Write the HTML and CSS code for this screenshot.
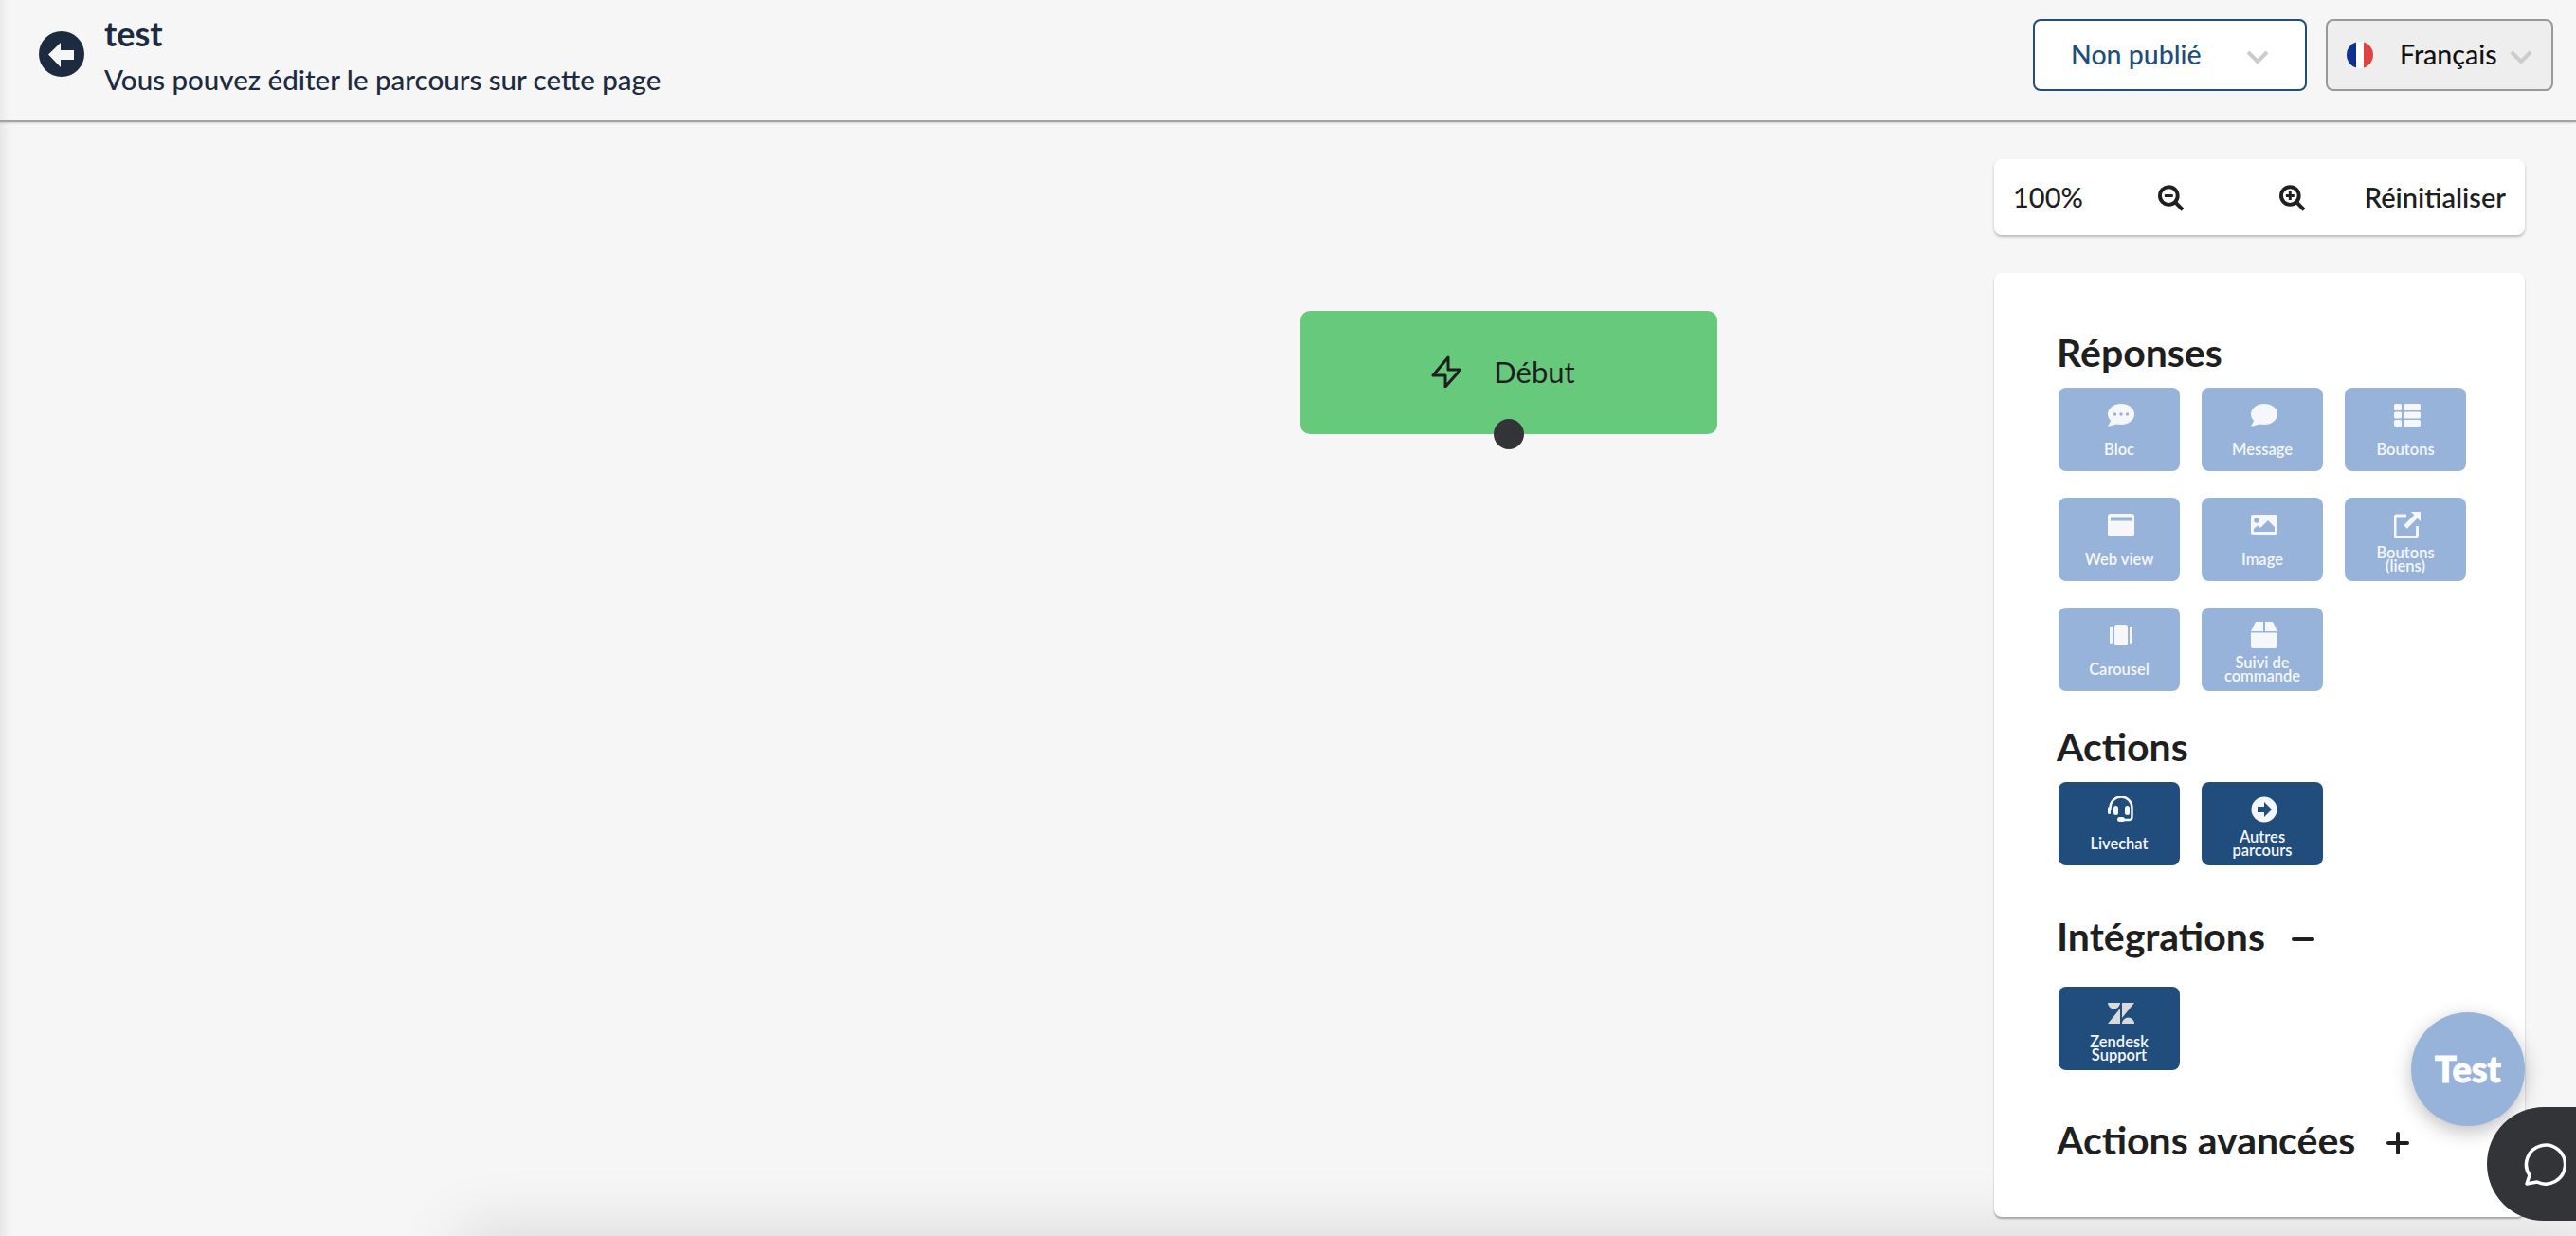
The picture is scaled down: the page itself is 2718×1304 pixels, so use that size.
FILE: index.html
```html
<!DOCTYPE html>
<html>
<head>
    <title>Parcours</title>
    <meta charset="utf-8">
    <link rel="stylesheet" href="styles.css">
</head>
<body>
    <header class="topbar">
        <div class="topbar-left">
            <svg class="back-icon" viewBox="0 0 48 48"><circle cx="24" cy="24" r="24" fill="#1d2b40"/><path d="M10 24.500 23 12v8h14v10H23v8z" fill="#f6f6f6"/></svg>
            <div>
                <div class="page-title">test</div>
                <div class="page-sub">Vous pouvez éditer le parcours sur cette page</div>
            </div>
        </div>
        <div class="topbar-right">
            <div class="select select-status">
                <span>Non publié</span>
                <svg class="chevron" viewBox="0 0 24 14"><path d="M2 2l10 10L22 2" fill="none" stroke="#ccc" stroke-width="4"/></svg>
            </div>
            <div class="select select-lang">
                <svg class="flag" viewBox="0 0 28 28"><defs><clipPath id="flag-clip"><circle cx="14" cy="14" r="14"/></clipPath></defs><g clip-path="url(#flag-clip)"><rect width="10" height="28" fill="#10328f"/><rect x="10" width="8" height="28" fill="#fff"/><rect x="18" width="10" height="28" fill="#e04144"/></g></svg>
                <span>Français</span>
                <svg class="chevron" viewBox="0 0 24 14"><path d="M2 2l10 10L22 2" fill="none" stroke="#ccc" stroke-width="4"/></svg>
            </div>
        </div>
    </header>

    <main class="canvas">
        <div class="canvas-shadow"></div>
        <div class="node">
            <svg class="node-icon" viewBox="0 0 32 34"><path d="M18 2 2 21h13v12l16-18H18z" fill="none" stroke="#1f1f1f" stroke-width="3" stroke-linejoin="round"/></svg>
            <span>Début</span>
            <div class="node-dot"></div>
        </div>

        <aside class="sidebar">
            <div class="zoombar">
                <span class="zoom-value">100%</span>
                <svg class="zoom-icon" viewBox="0 0 28 28"><circle cx="11.5" cy="11.5" r="9.5" fill="none" stroke="#1f1f1f" stroke-width="4"/><path d="M18 18l8.500 8.500" stroke="#1f1f1f" stroke-width="4"/><path d="M7 11.500h9" stroke="#1f1f1f" stroke-width="3"/></svg>
                <svg class="zoom-icon" viewBox="0 0 28 28"><circle cx="11.5" cy="11.5" r="9.5" fill="none" stroke="#1f1f1f" stroke-width="4"/><path d="M18 18l8.500 8.500" stroke="#1f1f1f" stroke-width="4"/><path d="M7 11.500h9M11.500 7v9" stroke="#1f1f1f" stroke-width="3"/></svg>
                <span class="zoom-reset">Réinitialiser</span>
            </div>

            <div class="panel">
                <h2 class="panel-title">Réponses</h2>
                <div class="tiles">
                    <div class="tile">
                        <svg class="tile-icon" viewBox="0 0 28 24"><ellipse cx="14" cy="11" rx="14" ry="11"/><path d="M4 16 0 24l11-3z"/><circle cx="7.500" cy="11" r="1.700" class="cut"/><circle cx="14" cy="11" r="1.700" class="cut"/><circle cx="20.500" cy="11" r="1.700" class="cut"/></svg>
                        <span class="tile-label">Bloc</span>
                    </div>
                    <div class="tile">
                        <svg class="tile-icon" viewBox="0 0 28 24"><ellipse cx="14" cy="11" rx="14" ry="11"/><path d="M4 16 0 24l11-3z"/></svg>
                        <span class="tile-label">Message</span>
                    </div>
                    <div class="tile">
                        <svg class="tile-icon" viewBox="0 0 28 24"><rect width="8" height="7" rx="1.500"/><rect x="10" width="18" height="7" rx="1.500"/><rect y="8.500" width="8" height="7" rx="1.500"/><rect x="10" y="8.500" width="18" height="7" rx="1.500"/><rect y="17" width="8" height="7" rx="1.500"/><rect x="10" y="17" width="18" height="7" rx="1.500"/></svg>
                        <span class="tile-label">Boutons</span>
                    </div>
                    <div class="tile">
                        <svg class="tile-icon" viewBox="0 0 28 24"><rect width="28" height="24" rx="3"/><rect x="3" y="3.500" width="22" height="4" class="cut"/></svg>
                        <span class="tile-label">Web view</span>
                    </div>
                    <div class="tile">
                        <svg class="tile-icon" viewBox="0 0 28 24"><rect y="1" width="28" height="21" rx="2"/><circle cx="6" cy="7" r="2.800" class="cut"/><path d="M3 19v-3l4-3.500 3 2.500 8-8 7 7v5z" class="cut"/></svg>
                        <span class="tile-label">Image</span>
                    </div>
                    <div class="tile">
                        <svg class="tile-icon tile-icon-tall" viewBox="0 0 28 28"><path d="M13 4H3a2 2 0 0 0-2 1.500V25a2 2 0 0 0 2 2h19.500a2 2 0 0 0 2-2V15" fill="none" stroke="#f5f7fa" stroke-width="3"/><path d="M18 0h10v10l-3.300-3.300-11 11-3.400-3.400 11-11z"/></svg>
                        <span class="tile-label">Boutons (liens)</span>
                    </div>
                    <div class="tile">
                        <svg class="tile-icon" viewBox="0 0 28 24"><rect x="7" y="1" width="14" height="22" rx="2.500"/><rect x="2" y="3" width="3" height="18" rx="1"/><rect x="23" y="3" width="3" height="18" rx="1"/></svg>
                        <span class="tile-label">Carousel</span>
                    </div>
                    <div class="tile">
                        <svg class="tile-icon tile-icon-tall" viewBox="0 0 28 28"><path d="M5 0h8v10H0zM15 0h8l5 10H15zM0 11.500h28V26a2 2 0 0 1-2 2H2a2 2 0 0 1-2-2z"/></svg>
                        <span class="tile-label">Suivi de commande</span>
                    </div>
                </div>

                <h2 class="panel-title title-actions">Actions</h2>
                <div class="tiles">
                    <div class="tile tile-dark">
                        <svg class="tile-icon tile-icon-tall" viewBox="0 0 28 28"><path d="M2.500 15V12a11.500 11.500 0 0 1 23 0v10a3 3 0 0 1-3 3H13" fill="none" stroke="#f5f7fa" stroke-width="2.500"/><rect x="10" y="22" width="8" height="5" rx="2.500"/><rect x="6" y="10" width="5" height="10" rx="2.500"/><rect x="18" y="10" width="5" height="10" rx="2.500"/><rect x="0" y="11" width="3" height="8" rx="1.500"/></svg>
                        <span class="tile-label">Livechat</span>
                    </div>
                    <div class="tile tile-dark">
                        <svg class="tile-icon tile-icon-tall" viewBox="0 0 28 28"><circle cx="14" cy="14" r="13.500"/><path d="M7 11h7V6l8 8-8 8v-5H7z" class="cut"/></svg>
                        <span class="tile-label">Autres parcours</span>
                    </div>
                </div>

                <h2 class="panel-title title-integrations">Intégrations <span class="toggle toggle-minus"></span></h2>
                <div class="tiles">
                    <div class="tile tile-dark">
                        <svg class="tile-icon zendesk" viewBox="0 0 28 22"><path d="M0 0h13a6.500 6.500 0 0 1-13 0zM15 0h13L15 16zM13 6v16H0zM15 22a6.500 6.500 0 0 1 13 0z"/></svg>
                        <span class="tile-label">Zendesk Support</span>
                    </div>
                </div>

                <h2 class="panel-title title-advanced">Actions avancées <span class="toggle toggle-plus"></span></h2>
            </div>
        </aside>

        <div class="test-btn">Test</div>
        <div class="chat-btn">
            <svg viewBox="0 0 46 46" width="46" height="46"><path d="M5 44l3-9A20.500 20.500 0 1 1 16 42z" fill="none" stroke="#fff" stroke-width="3.500" stroke-linejoin="round"/></svg>
        </div>
    </main>
</body>
</html>
```

FILE: styles.css
```css
* {
    box-sizing: border-box;
}
html, body {
    margin: 0;
    height: 100%;
    overflow: hidden;
}
body {
    font-family: "Lato", "Liberation Sans", sans-serif;
    font-weight: 500;
    background: #f6f6f6;
    color: #1f1f1f;
    display: flex;
    flex-direction: column;
}

/* header */
.topbar {
    height: 129px;
    flex: none;
    display: flex;
    justify-content: space-between;
    padding: 20px 24px 0 41px;
    border-bottom: 2px solid #a3a3a3;
    box-shadow: 0 1px 2px rgba(0,0,0,0.15), inset 12px 0 12px -10px rgba(0,0,0,0.08);
    position: relative;
    z-index: 2;
}
.topbar-left {
    display: flex;
    align-items: flex-start;
    gap: 21px;
}
.back-icon {
    width: 48px;
    height: 48px;
    margin-top: 13px;
}
.page-title {
    font-size: 36px;
    font-weight: 700;
    line-height: 40px;
    margin-top: -5px;
    color: #1d2b40;
}
.page-sub {
    font-size: 29.5px;
    line-height: 36px;
    margin-top: 11px;
    color: #1d2b40;
}
.topbar-right {
    display: flex;
    gap: 20px;
}
.select {
    height: 76px;
    border-radius: 8px;
    display: flex;
    align-items: center;
    font-size: 28.5px;
}
.select span {
    margin-top: -2px;
}
.select-status {
    width: 289px;
    padding: 0 38px 0 38px;
    justify-content: space-between;
    background: #fff;
    border: 2px solid #214d7c;
    color: #214d7c;
}
.select-lang {
    width: 240px;
    padding: 0 20px;
    background: #eee;
    border: 2px solid #97989b;
    color: #111;
}
.chevron {
    width: 24px;
    height: 14px;
    margin-top: 4px;
}
.flag {
    width: 28px;
    height: 28px;
    margin-right: 28px;
}
.select-lang .chevron {
    margin-left: auto;
}

/* canvas */
.canvas {
    flex: 1;
    position: relative;
    overflow: hidden;
    display: flex;
    justify-content: flex-end;
    padding: 39px 54px 0 0;
    box-shadow: inset 14px 0 14px -12px rgba(0,0,0,0.1);
}
.canvas-shadow {
    position: absolute;
    left: 500px;
    right: 0;
    bottom: -70px;
    height: 60px;
    box-shadow: 0 0 70px 16px rgba(0,0,0,0.12);
}
.node {
    position: absolute;
    left: 1372px;
    top: 199px;
    width: 440px;
    height: 130px;
    border-radius: 10px;
    background: #66c97c;
    display: flex;
    align-items: center;
    justify-content: center;
    gap: 34px;
    padding-right: 12px;
    font-size: 31px;
    font-weight: 400;
}
.node span {
    margin-top: -2px;
}
.node-icon {
    width: 32px;
    height: 34px;
    margin-top: -2px;
}
.node-dot {
    position: absolute;
    left: 204px;
    bottom: -16px;
    width: 32px;
    height: 32px;
    border-radius: 50%;
    background: #333438;
}

/* right column */
.sidebar {
    width: 560px;
    display: flex;
    flex-direction: column;
    gap: 40px;
    position: relative;
}
.zoombar {
    height: 80px;
    flex: none;
    background: #fff;
    border-radius: 8px;
    box-shadow: 0 2px 3px rgba(0,0,0,0.25);
    display: flex;
    align-items: center;
    padding: 0 20px;
    font-size: 29px;
}
.zoom-value {
    width: 152px;
    margin-top: -2px;
}
.zoom-icon {
    width: 28px;
    height: 28px;
    margin-top: 2px;
    margin-left: 3px;
    margin-right: 98px;
}
.zoom-icon + .zoom-icon {
    margin-right: 62px;
}
.zoom-reset {
    font-weight: 600;
    margin-top: -2px;
}
.panel {
    height: 996px;
    flex: none;
    background: #fff;
    border-radius: 8px;
    box-shadow: 0 2px 2px rgba(0,0,0,0.3);
    padding: 60px 0 0 68px;
}
.panel-title {
    margin: 0 0 0 -2px;
    font-size: 41px;
    line-height: 48px;
    font-weight: 700;
    color: #1f1f1f;
    white-space: nowrap;
}
.tiles {
    display: grid;
    grid-template-columns: repeat(3, 128px);
    column-gap: 23px;
    row-gap: 28px;
    margin-top: 13px;
}
.tile {
    height: 88px;
    border-radius: 8px;
    background: #97b3d9;
    color: #f5f7fa;
    fill: #f5f7fa;
    display: flex;
    flex-direction: column;
    align-items: center;
    padding-top: 17px;
    position: relative;
}
.tile .cut {
    fill: #97b3d9;
}
.tile-dark {
    background: #214d7c;
}
.tile-dark .cut {
    fill: #214d7c;
}
.tile-icon {
    width: 28px;
    height: 24px;
    margin-left: 3px;
    flex: none;
}
.tile-icon-tall {
    height: 28px;
    margin-top: -2px;
}
.zendesk {
    height: 22px;
    fill: #d8dadd;
}
.tile-label {
    position: absolute;
    left: 20px;
    right: 20px;
    top: 46px;
    height: 38px;
    display: flex;
    align-items: center;
    justify-content: center;
    text-align: center;
    font-size: 16.5px;
    line-height: 14px;
    font-weight: 600;
}
.title-actions {
    margin-top: 35px;
}
.title-integrations {
    margin-top: 51px;
}
.title-integrations + .tiles {
    margin-top: 29px;
}
.title-advanced {
    margin-top: 50px;
}
.toggle {
    display: inline-block;
    position: relative;
    width: 24px;
    height: 4px;
    background: #1f1f1f;
    border-radius: 2px;
    margin-left: 18px;
    vertical-align: 10px;
}
.toggle-plus {
    margin-left: 23px;
}
.toggle-plus::after {
    content: "";
    position: absolute;
    left: 10px;
    top: -10px;
    width: 4px;
    height: 24px;
    background: #1f1f1f;
    border-radius: 2px;
}

/* floating buttons */
.test-btn {
    position: absolute;
    left: 2544px;
    top: 939px;
    width: 120px;
    height: 120px;
    border-radius: 50%;
    background: #97b3d9;
    box-shadow: 0 6px 20px rgba(0,0,0,0.25);
    color: #fff;
    font-size: 38px;
    font-weight: 900;
    -webkit-text-stroke: 1px #fff;
    padding-bottom: 2px;
    display: flex;
    align-items: center;
    justify-content: center;
}
.chat-btn {
    position: absolute;
    left: 2624px;
    top: 1039px;
    width: 94px;
    height: 120px;
    border-radius: 60px 0 0 60px;
    background: #333438;
    display: flex;
    align-items: center;
    padding-left: 37px;
}
```
